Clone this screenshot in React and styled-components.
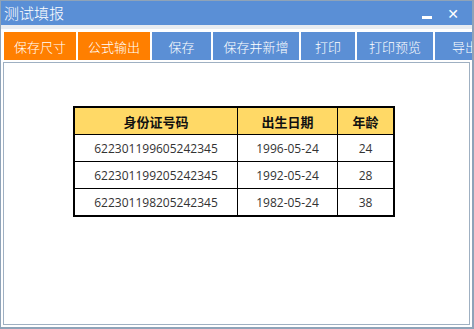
import React from 'react'
import styled, { createGlobalStyle } from 'styled-components'

const GlobalStyle = createGlobalStyle`
  html, body {
    margin: 0;
    padding: 0;
    background: #ffffff;
    font-family: "Noto Sans", "Noto Sans CJK SC", sans-serif;
  }
`

const buttons = [
  { label: '保存尺寸', width: 72, tone: 'orange' },
  { label: '公式输出', width: 72, tone: 'orange' },
  { label: '保存', width: 59, tone: 'blue' },
  { label: '保存并新增', width: 86, tone: 'blue' },
  { label: '打印', width: 54, tone: 'blue' },
  { label: '打印预览', width: 76, tone: 'blue' },
  { label: '导出', width: 60, tone: 'blue' },
]

const rows = [
  { id: '622301199605242345', birth: '1996-05-24', age: 24 },
  { id: '622301199205242345', birth: '1992-05-24', age: 28 },
  { id: '622301198205242345', birth: '1982-05-24', age: 38 },
]

function App() {
  return (
    <Window>
      <GlobalStyle />
      <TitleBar>
        <Title>测试填报</Title>
        <Controls>
          <Minimize />
          <Close>✕</Close>
        </Controls>
      </TitleBar>
      <Strip />
      <Toolbar>
        {buttons.map((b) => (
          <ToolButton key={b.label} $w={b.width} $tone={b.tone}>
            {b.label}
          </ToolButton>
        ))}
      </Toolbar>
      <Content>
        <Table>
          <thead>
            <tr>
              <Th $w={162}>身份证号码</Th>
              <Th $w={99}>出生日期</Th>
              <Th $w={55}>年龄</Th>
            </tr>
          </thead>
          <tbody>
            {rows.map((r) => (
              <tr key={r.id}>
                <Td>{r.id}</Td>
                <Td>{r.birth}</Td>
                <Td>{r.age}</Td>
              </tr>
            ))}
          </tbody>
        </Table>
      </Content>
    </Window>
  )
}

const Window = styled.div`
  width: 474px;
  height: 329px;
  box-sizing: border-box;
  border: 1px solid #8fa3b8;
  border-right-width: 2px;
  border-bottom-width: 2px;
  background: #ffffff;
  display: flex;
  flex-direction: column;
  overflow: hidden;
`

const TitleBar = styled.div`
  height: 24px;
  background: #5a8fd6;
  display: flex;
  align-items: center;
  justify-content: space-between;
  padding: 0 0 0 3px;
  flex-shrink: 0;
`

const Title = styled.div`
  color: #ffffff;
  font-family: "Noto Sans CJK SC", sans-serif;
  font-size: 15px;
  font-weight: 300;
  line-height: 24px;
`

const Controls = styled.div`
  display: flex;
  align-items: center;
  gap: 15px;
  padding-right: 13px;
  padding-top: 2px;
`

const Minimize = styled.div`
  width: 10px;
  height: 3px;
  background: #ffffff;
  margin-top: 6px;
`

const Close = styled.div`
  color: #ffffff;
  font-family: "DejaVu Sans", sans-serif;
  font-weight: bold;
  font-size: 14px;
  line-height: 14px;
`

const Strip = styled.div`
  height: 4px;
  background: #e8ecf1;
  flex-shrink: 0;
`

const Toolbar = styled.div`
  display: flex;
  gap: 2px;
  padding: 3px 0 2px 3px;
  flex-shrink: 0;
`

const ToolButton = styled.div`
  width: ${(p) => p.$w}px;
  height: 28px;
  flex-shrink: 0;
  background: ${(p) => (p.$tone === 'orange' ? '#ff7f00' : '#5b8fd5')};
  color: #ffffff;
  font-family: "Noto Sans CJK SC", sans-serif;
  font-size: 13px;
  font-weight: 300;
  display: flex;
  align-items: center;
  justify-content: center;
`

const Content = styled.div`
  flex: 1;
  margin: 0 2px 2px 2px;
  border: 1px solid #9fb0c2;
  padding: 43px 0 0 69px;
`

const Table = styled.table`
  border-collapse: collapse;
  border: 2px solid #000000;
  font-size: 12px;
`

const Th = styled.th`
  width: ${(p) => p.$w}px;
  height: 26px;
  padding: 0;
  background: #ffd966;
  border: 1px solid #000000;
  font-family: "Noto Sans CJK SC", sans-serif;
  font-weight: bold;
  font-size: 13px;
  color: #111111;
  text-align: center;
`

const Td = styled.td`
  height: 26px;
  padding: 0;
  border: 1px solid #000000;
  color: #333333;
  text-align: center;
  font-family: "Open Sans", "Noto Sans CJK SC", sans-serif;
`

export default App
